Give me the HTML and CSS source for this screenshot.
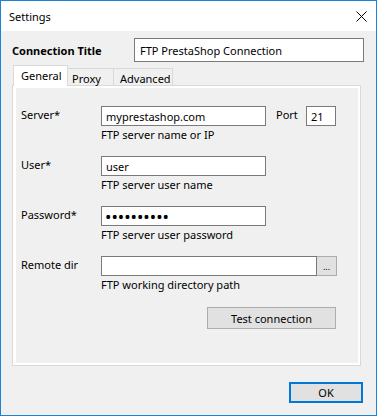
FILE: index.html
```html
<!DOCTYPE html>
<html lang="en">
  <head>
    <meta charset="UTF-8" />
    <meta name="viewport" content="width=device-width, initial-scale=1.0" />
    <title>Settings</title>
    <link rel="stylesheet" href="styles.css">
  </head>
  <body>
    <div class="window">
      <header class="titlebar">
        <span class="titlebar-text">Settings</span>
        <svg class="close" width="11" height="11" viewBox="0 0 11 11">
          <path d="M0.5 0.5 L10.5 10.5 M10.5 0.5 L0.5 10.5" stroke="#000" stroke-width="1" fill="none" />
        </svg>
      </header>

      <div class="content">
        <div class="title-row">
          <label class="title-label">Connection Title</label>
          <input class="title-input" type="text" value="FTP PrestaShop Connection" />
        </div>

        <!-- Tabs -->
        <div class="tabs">
          <div class="tab active">General</div>
          <div class="tab tab-proxy">Proxy</div>
          <div class="tab tab-advanced">Advanced</div>
        </div>

        <div class="panel">
          <div class="page">
            <div class="row">
              <label class="label">Server*</label>
              <div class="field">
                <input class="input" type="text" value="myprestashop.com" />
                <div class="hint">FTP server name or IP</div>
              </div>
              <div class="port">
                <label class="port-label">Port</label>
                <input class="input port-input" type="text" value="21" />
              </div>
            </div>

            <div class="row">
              <label class="label">User*</label>
              <div class="field">
                <input class="input" type="text" value="user" />
                <div class="hint">FTP server user name</div>
              </div>
            </div>

            <div class="row">
              <label class="label">Password*</label>
              <div class="field">
                <input class="input password" type="password" value="secret1234" />
                <div class="hint">FTP server user password</div>
              </div>
            </div>

            <div class="row">
              <label class="label">Remote dir</label>
              <div class="field wide">
                <div class="browse">
                  <input class="input" type="text" value="" />
                  <button class="browse-button">...</button>
                </div>
                <div class="hint">FTP working directory path</div>
              </div>
            </div>

            <div class="actions">
              <button class="button test-button">Test connection</button>
            </div>
          </div>
        </div>

        <div class="footer">
          <button class="button ok-button">OK</button>
        </div>
      </div>
    </div>
  </body>
</html>
```

FILE: styles.css
```css
* {
  margin: 0;
  padding: 0;
  box-sizing: border-box;
}

body {
  width: 377px;
  height: 416px;
  background: #f0f0f0;
  color: #000;
  font-family: "Noto Sans", "Open Sans", sans-serif;
  font-size: 11px;
  overflow: hidden;
}

.window {
  width: 377px;
  height: 416px;
  border: 1px solid #1883d7;
  display: flex;
  flex-direction: column;
  background: #f0f0f0;
}

.titlebar {
  height: 30px;
  background: #fff;
  display: flex;
  align-items: center;
  justify-content: space-between;
  padding: 0 9px 0 8px;
}

.titlebar-text {
  font-size: 11px;
}

.close {
  display: block;
}

.content {
  flex: 1;
  display: flex;
  flex-direction: column;
  padding: 7px 12px 0 11px;
}

.title-row {
  display: grid;
  grid-template-columns: 122px 1fr;
  align-items: center;
  height: 24px;
}

.title-label {
  font-weight: bold;
  font-size: 11px;
}

.title-input {
  height: 24px;
  border: 1px solid #7a7a7a;
  background: #fff;
  padding: 0 5px;
  font-family: inherit;
  font-size: 11px;
  color: #000;
  outline: none;
}

/* Tabs */
.tabs {
  display: flex;
  align-items: flex-end;
  margin-top: 3px;
  padding-left: 1px;
  position: relative;
  z-index: 2;
}

.tab {
  height: 17px;
  border: 1px solid #d9d9d9;
  border-bottom: none;
  background: #f0f0f0;
  display: flex;
  align-items: center;
  margin-left: -1px;
  padding-top: 2px;
}

.tab:first-child {
  margin-left: 0;
}

.tab-proxy {
  width: 47px;
  padding-left: 4px;
}

.tab-advanced {
  width: 60px;
  padding-left: 6px;
}

.tab.active {
  width: 55px;
  height: 21px;
  margin-bottom: -1px;
  background: #fff;
  padding: 0 0 2px 7px;
  position: relative;
  z-index: 3;
}

.panel {
  flex: 1;
  margin-right: 3px;
  border: 1px solid #d9d9d9;
  background: #fff;
  padding: 2px 2px 2px 3px;
  display: flex;
}

.page {
  flex: 1;
  background: #f0f0f0;
  padding: 18px 0 0 5px;
}

.row {
  display: grid;
  grid-template-columns: 80px 165px auto;
  height: 50px;
}

.label {
  padding-top: 1px;
}

.field.wide {
  grid-column: 2 / 4;
}

.input {
  display: block;
  width: 165px;
  height: 20px;
  border: 1px solid #7a7a7a;
  background: #fff;
  padding: 0 4px;
  font-family: inherit;
  font-size: 11px;
  color: #000;
  outline: none;
}

.password {
  font-size: 17px;
  padding-left: 3px;
}

.hint {
  line-height: 15px;
  padding-top: 1px;
}

.port {
  display: flex;
  align-items: flex-start;
  padding-left: 10px;
}

.port-label {
  width: 30px;
  padding-top: 1px;
}

.port-input {
  width: 30px;
}

.browse {
  display: flex;
}

.browse .input {
  width: 216px;
}

.browse-button {
  width: 20px;
  height: 20px;
  border: 1px solid #adadad;
  border-left: none;
  background: #e1e1e1;
  font-family: inherit;
  font-size: 9px;
  color: #000;
}

.actions {
  display: flex;
  justify-content: flex-end;
  padding-right: 22px;
  margin-top: 1px;
}

.button {
  background: #e1e1e1;
  border: 1px solid #adadad;
  font-family: inherit;
  font-size: 11px;
  color: #000;
}

.test-button {
  width: 129px;
  height: 22px;
}

.footer {
  display: flex;
  justify-content: flex-end;
  padding: 16px 1px 12px 0;
}

.ok-button {
  width: 74px;
  height: 21px;
  border: 2px solid #0078d7;
}
```
